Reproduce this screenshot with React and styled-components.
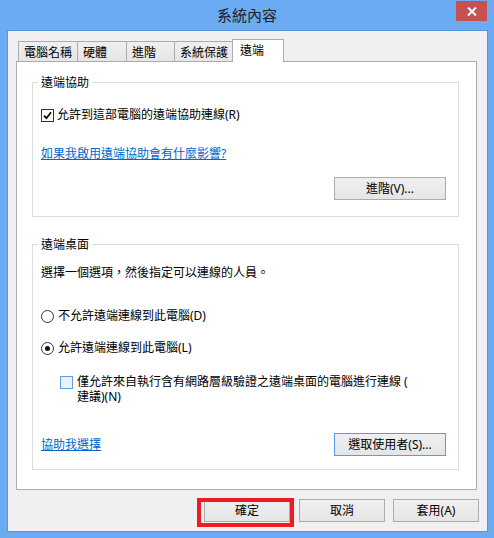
import React from "react";
import styled, { createGlobalStyle } from "styled-components";

const GlobalStyle = createGlobalStyle`
  body {
    margin: 0;
    background: #7a7a7a;
    font-family: "Noto Sans", "Noto Sans CJK TC", sans-serif;
  }
`;

const Window = styled.div`
  width: 494px;
  height: 538px;
  box-sizing: border-box;
  padding: 0 6px 6px 7px;
  background: #6babf3;
  display: flex;
  flex-direction: column;
`;

const TitleBar = styled.div`
  height: 30px;
  margin: 0 -6px 0 -7px;
  display: grid;
  grid-template-columns: 1fr auto 1fr;
  align-items: start;
`;

const Title = styled.div`
  grid-column: 2;
  font-family: "Noto Sans CJK TC", sans-serif;
  font-size: 15px;
  line-height: 30px;
  color: #222;
`;

const CloseButton = styled.div`
  grid-column: 3;
  justify-self: end;
  margin: 1px 7px 0 0;
  width: 31px;
  height: 20px;
  background: #c75050;
  display: flex;
  align-items: center;
  justify-content: center;
`;

const Client = styled.div`
  flex: 1;
  border: 1px solid #5896e0;
  background: #f0f0f0;
  display: flex;
  flex-direction: column;
  font-size: 12px;
  color: #000;
`;

const TabRow = styled.div`
  display: flex;
  align-items: flex-end;
  height: 22px;
  margin: 8px 0 0 10px;
`;

const Tab = styled.div`
  box-sizing: border-box;
  width: ${(p) => p.$w}px;
  height: ${(p) => (p.$active ? 23 : 20)}px;
  margin-left: ${(p) => (p.$first ? 0 : -1)}px;
  margin-bottom: ${(p) => (p.$active ? -1 : 0)}px;
  padding-left: ${(p) => (p.$active ? 7 : 5)}px;
  border: 1px solid #acacac;
  border-bottom: none;
  background: ${(p) =>
    p.$active ? "#fff" : "linear-gradient(#f0f0f0, #e5e5e5)"};
  line-height: ${(p) => (p.$active ? 20 : 19)}px;
  white-space: nowrap;
  z-index: ${(p) => (p.$active ? 1 : 0)};
  font-family: "Noto Sans CJK TC", sans-serif;
`;

const Panel = styled.div`
  box-sizing: border-box;
  width: 461px;
  height: 429px;
  margin-left: 8px;
  padding: 12px 17px 0 15px;
  border: 1px solid #acacac;
  background: #fff;
  display: flex;
  flex-direction: column;
`;

const Group = styled.fieldset`
  margin: ${(p) => p.$top}px 0 0 0;
  padding: 0 12px ${(p) => p.$bottom}px 8px;
  min-width: 0;
  border: 1px solid #dcdcdc;
  display: flex;
  flex-direction: column;
`;

const Legend = styled.legend`
  padding: 0 3px;
  margin-left: -3px;
  line-height: 16px;
  font-family: "Noto Sans CJK TC", sans-serif;
`;

const Row = styled.div`
  display: flex;
  align-items: ${(p) => (p.$top ? "flex-start" : "center")};
  gap: ${(p) => p.$gap ?? 3}px;
  margin-top: ${(p) => p.$mt}px;
  margin-left: ${(p) => p.$indent ?? 0}px;
  line-height: ${(p) => p.$lh ?? 16}px;
`;

const SpreadRow = styled.div`
  display: flex;
  align-items: center;
  justify-content: ${(p) => (p.$right ? "flex-end" : "space-between")};
  margin-top: ${(p) => p.$mt}px;
`;

const Text = styled.span`
  line-height: inherit;
`;

const Link = styled.a`
  color: #0066cc;
  text-decoration: underline;
  line-height: 16px;
  cursor: pointer;
`;

const Box = styled.span`
  box-sizing: border-box;
  width: ${(p) => p.$size ?? 13}px;
  height: ${(p) => p.$size ?? 13}px;
  flex-shrink: 0;
  margin-top: ${(p) => p.$mt ?? 0}px;
  border: 1px solid ${(p) => (p.$hot ? "#5a9fe8" : "#333")};
  background: ${(p) => (p.$hot ? "#e9f3fd" : "#fff")};
  display: inline-flex;
  align-items: center;
  justify-content: center;
`;

const Radio = styled.span`
  box-sizing: border-box;
  width: 13px;
  height: 13px;
  flex-shrink: 0;
  border: 1px solid #333;
  border-radius: 50%;
  background: #fff;
  display: inline-flex;
  align-items: center;
  justify-content: center;
  &::after {
    content: "";
    width: 5px;
    height: 5px;
    border-radius: 50%;
    background: ${(p) => (p.$checked ? "#111" : "transparent")};
  }
`;

const Button = styled.button`
  position: relative;
  box-sizing: border-box;
  width: ${(p) => p.$w}px;
  height: 23px;
  padding: 0;
  border: 1px solid ${(p) => (p.$focus ? "#4d9ff0" : "#acacac")};
  background: linear-gradient(#f0f0f0, #e5e5e5);
  font-family: "Noto Sans", "Noto Sans CJK TC", sans-serif;
  font-size: 12px;
  color: #000;
  line-height: 20px;
  &::after {
    content: "";
    display: ${(p) => (p.$marked ? "block" : "none")};
    position: absolute;
    left: -8px;
    top: -2px;
    right: -5px;
    bottom: -6px;
    border: 4px solid #ed1c24;
  }
`;

const ButtonBar = styled.div`
  display: flex;
  justify-content: flex-end;
  gap: 8px;
  margin: 9px 8px 0 0;
`;

const Check = () => (
  <svg width="9" height="9" viewBox="0 0 9 9">
    <path d="M1 4.6 L3.5 7.2 L8 1.2" fill="none" stroke="#000" strokeWidth="1.7" />
  </svg>
);

const tabs = [
  { label: "電腦名稱", w: 60 },
  { label: "硬體", w: 50 },
  { label: "進階", w: 49 },
  { label: "系統保護", w: 59 },
  { label: "遠端", w: 52, active: true },
];

export default function App() {
  return (
    <>
      <GlobalStyle />
      <Window>
        <TitleBar>
          <Title>系統內容</Title>
          <CloseButton>
            <svg width="10" height="9" viewBox="0 0 10 9">
              <path d="M1 0.5 L9 8.5 M9 0.5 L1 8.5" stroke="#fff" strokeWidth="2" />
            </svg>
          </CloseButton>
        </TitleBar>
        <Client>
          <TabRow>
            {tabs.map((t, i) => (
              <Tab key={t.label} $w={t.w} $active={t.active} $first={i === 0}>
                {t.label}
              </Tab>
            ))}
          </TabRow>
          <Panel>
            <Group $top={0} $bottom={16}>
              <Legend>遠端協助</Legend>
              <Row $mt={17}>
                <Box>
                  <Check />
                </Box>
                <Text>允許到這部電腦的遠端協助連線(R)</Text>
              </Row>
              <Row $mt={23}>
                <Link>如果我啟用遠端協助會有什麼影響?</Link>
              </Row>
              <SpreadRow $right $mt={15}>
                <Button $w={112}>進階(V)...</Button>
              </SpreadRow>
            </Group>
            <Group $top={19} $bottom={13}>
              <Legend>遠端桌面</Legend>
              <Row $mt={13}>
                <Text>選擇一個選項，然後指定可以連線的人員。</Text>
              </Row>
              <Row $mt={27} $gap={4}>
                <Radio />
                <Text>不允許遠端連線到此電腦(D)</Text>
              </Row>
              <Row $mt={16} $gap={4}>
                <Radio $checked />
                <Text>允許遠端連線到此電腦(L)</Text>
              </Row>
              <Row $mt={18} $indent={19} $gap={4} $lh={15} $top>
                <Box $hot $mt={2} $size={13} />
                <Text>
                  僅允許來自執行含有網路層級驗證之遠端桌面的電腦進行連線 (
                  <br />
                  建議)(N)
                </Text>
              </Row>
              <SpreadRow $mt={29}>
                <Link>協助我選擇</Link>
                <Button $w={112} $focus>
                  選取使用者(S)...
                </Button>
              </SpreadRow>
            </Group>
          </Panel>
          <ButtonBar>
            <Button $w={86} $marked style={{ marginRight: 1 }}>
              確定
            </Button>
            <Button $w={86}>取消</Button>
            <Button $w={86}>套用(A)</Button>
          </ButtonBar>
        </Client>
      </Window>
    </>
  );
}
